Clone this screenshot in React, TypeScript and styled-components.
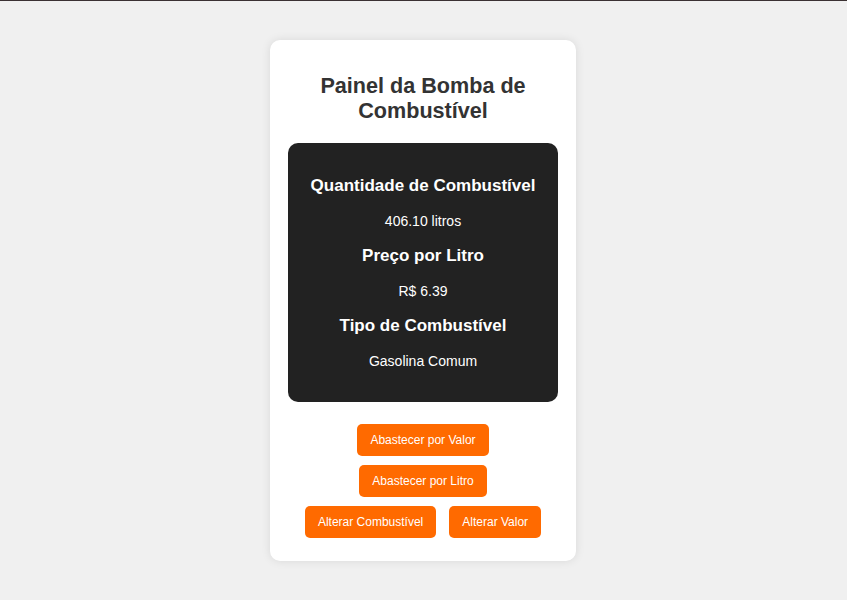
import React from 'react';
import styled, { createGlobalStyle } from 'styled-components';

const GlobalStyle = createGlobalStyle`
  html, body {
    margin: 0;
    padding: 0;
    background-color: #f0f0f0;
    font-family: 'Liberation Sans', Arial, sans-serif;
  }
  body {
    border-top: 1px solid #3b3133;
  }
`;

const Page = styled.div`
  display: flex;
  justify-content: center;
  align-items: flex-start;
  padding: 39px 1px 0 0;
  min-height: 560px;
`;

const Card = styled.div`
  width: 270px;
  padding: 34px 18px 23px;
  background-color: #ffffff;
  border-radius: 10px;
  box-shadow: 0 0 10px rgba(0, 0, 0, 0.1);
  display: flex;
  flex-direction: column;
`;

const Title = styled.h1`
  margin: 0 0 19px;
  font-size: 21.6px;
  font-weight: 700;
  line-height: 24.8px;
  color: #333333;
  text-align: center;
`;

const Display = styled.div`
  background-color: #222222;
  border-radius: 10px;
  padding: 33px 0;
  display: flex;
  flex-direction: column;
  gap: 17px;
  text-align: center;
  color: #ffffff;
`;

const Label = styled.h3`
  margin: 0;
  font-size: 17px;
  font-weight: 700;
  line-height: 20px;
`;

const Value = styled.p`
  margin: 0;
  font-size: 14px;
  line-height: 16px;
`;

const Controls = styled.div`
  margin-top: 22px;
  display: flex;
  flex-direction: column;
  gap: 9px;
`;

const ButtonRow = styled.div`
  display: flex;
  justify-content: center;
  gap: 13px;
`;

const Button = styled.button`
  border: none;
  border-radius: 5px;
  background-color: #ff6a00;
  color: #ffffff;
  font-family: 'Liberation Sans', Arial, sans-serif;
  font-size: 12px;
  line-height: 14px;
  padding: 9px 13px;
  cursor: pointer;
`;

type Reading = {
  label: string;
  value: string;
};

const readings: Reading[] = [
  { label: 'Quantidade de Combustível', value: '406.10 litros' },
  { label: 'Preço por Litro', value: 'R$ 6.39' },
  { label: 'Tipo de Combustível', value: 'Gasolina Comum' },
];

const App: React.FC = () => (
  <>
    <GlobalStyle />
    <Page>
      <Card>
        <Title>Painel da Bomba de Combustível</Title>
        <Display>
          {readings.map((r) => (
            <React.Fragment key={r.label}>
              <Label>{r.label}</Label>
              <Value>{r.value}</Value>
            </React.Fragment>
          ))}
        </Display>
        <Controls>
          <ButtonRow>
            <Button>Abastecer por Valor</Button>
          </ButtonRow>
          <ButtonRow>
            <Button>Abastecer por Litro</Button>
          </ButtonRow>
          <ButtonRow>
            <Button>Alterar Combustível</Button>
            <Button>Alterar Valor</Button>
          </ButtonRow>
        </Controls>
      </Card>
    </Page>
  </>
);

export default App;
